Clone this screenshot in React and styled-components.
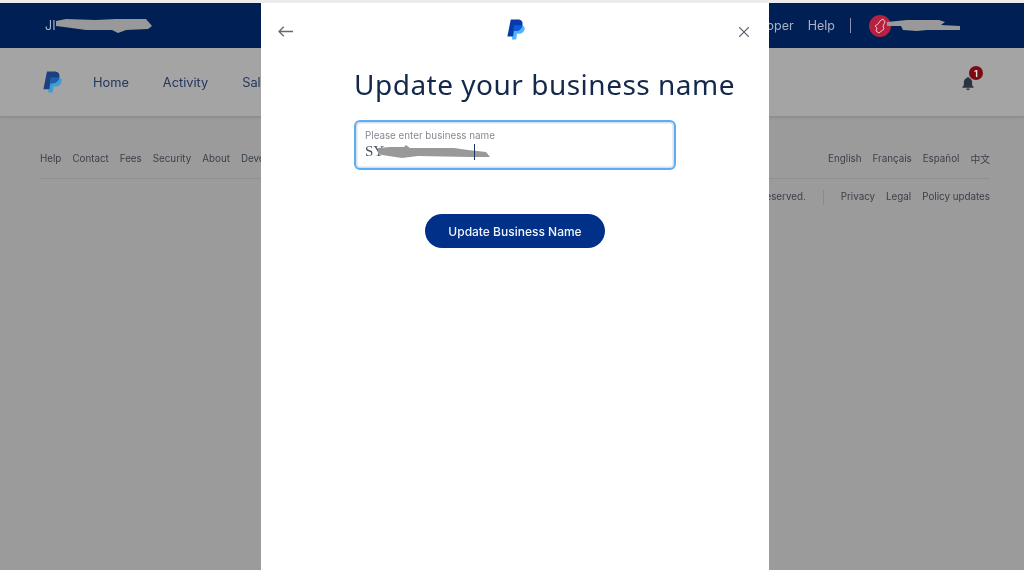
import React from "react";
import styled, { createGlobalStyle } from "styled-components";
import { X } from "lucide-react";

const Global = createGlobalStyle`
  html, body { margin: 0; padding: 0; height: 100%; overflow: hidden; background: #fff; }
  #root { height: 570px; }
  * { box-sizing: border-box; }
`;

const Screen = styled.div`
  position: relative;
  width: 1024px;
  height: 570px;
  overflow: hidden;
  background: #9b9b9b;
  font-family: Inter, "Liberation Sans", sans-serif;
  filter: blur(0.3px);
`;
const Backdrop = styled.div`
  display: flex;
  flex-direction: column;
  height: 100%;
`;
const TopStrip = styled.div`
  height: 3px;
  background: #ececec;
`;
const TopBar = styled.header`
  height: 45px;
  background: #001f55;
  display: flex;
  align-items: center;
  justify-content: space-between;
  padding: 0 64px 0 45px;
  color: #a9b2c4;
  font-size: 12.5px;
`;
const Group = styled.div`
  display: flex;
  align-items: center;
  gap: ${(p) => p.$gap || 0}px;
`;
const NavLinks = styled(Group)`
  margin-left: 31px;
`;
const Divider = styled.span`
  width: 1px;
  height: 15px;
  background: #8a93a8;
  margin: 0 18px 0 15px;
`;
const Avatar = styled.span`
  width: 22px;
  height: 22px;
  border-radius: 50%;
  background: #b5213f;
  display: flex;
  align-items: center;
  justify-content: center;
`;
const Blob = styled.svg`
  display: block;
  flex: none;
  fill: #999;
  margin-left: ${(p) => p.$shift || 0}px;
`;
const SubNav = styled.nav`
  height: 68px;
  background: #a4a4a4;
  box-shadow: 0 1px 3px rgba(0, 0, 0, 0.15);
  display: flex;
  align-items: center;
  justify-content: space-between;
  padding: 0 41px 0 43px;
`;
const NavLink = styled.span`
  font-size: 12.8px;
  color: #23375f;
`;
const BellWrap = styled.div`
  position: relative;
  width: 12px;
  height: 14px;
  margin-right: 9px;
`;
const Badge = styled.span`
  position: absolute;
  top: -9px;
  left: 7px;
  width: 14px;
  height: 14px;
  border-radius: 50%;
  background: #7c0a12;
  color: #ddd;
  font-size: 9px;
  font-weight: 700;
  display: flex;
  align-items: center;
  justify-content: center;
`;
const Footer = styled.footer`
  padding: 36px 34px 0 40px;
  font-size: 9.8px;
  line-height: 12px;
  color: #3a3f49;
`;
const FooterTop = styled.div`
  display: flex;
  align-items: flex-start;
  justify-content: space-between;
  height: 27px;
  padding-top: 1px;
  border-bottom: 1px solid #8f8f8f;
`;
const FooterBottom = styled.div`
  display: flex;
  align-items: center;
  justify-content: flex-end;
  height: 36px;
`;
const FooterDivider = styled.span`
  width: 1px;
  height: 15px;
  background: #8a8a8a;
  margin: 0 17px;
`;
const Cjk = styled.span`
  font-family: "Noto Sans CJK SC", sans-serif;
`;

const Modal = styled.section`
  position: absolute;
  top: 3px;
  left: 261px;
  width: 508px;
  bottom: 0;
  background: #fff;
  display: flex;
  flex-direction: column;
`;
const ModalHead = styled.div`
  height: 57px;
  display: flex;
  align-items: center;
  justify-content: space-between;
  padding: 0 16px 0 17px;
  color: #616874;
`;
const HeadLogo = styled.div`
  margin: 0 0 4px 3px;
`;
const ModalBody = styled.div`
  padding: 0 93px;
  display: flex;
  flex-direction: column;
`;
const Title = styled.h1`
  margin: 4px 0 0;
  font-family: "Noto Sans", sans-serif;
  font-weight: 400;
  font-size: 28px;
  line-height: 40px;
  letter-spacing: 0.5px;
  color: #14284b;
  white-space: nowrap;
`;
const Field = styled.div`
  position: relative;
  margin-top: 16px;
  width: 322px;
  height: 50px;
  border: 2px solid #5aaef6;
  border-radius: 6px;
  box-shadow: inset 0 0 0 1.5px #dcdfe3;
  padding: 8px 9px 0;
`;
const FieldLabel = styled.div`
  font-size: 9.8px;
  line-height: 12px;
  color: #858a92;
`;
const FieldValue = styled.div`
  display: flex;
  align-items: center;
  height: 19px;
  font-family: "Liberation Serif", serif;
  font-size: 15px;
  color: #4a5463;
`;
const Caret = styled.span`
  position: absolute;
  left: 118px;
  top: 22px;
  width: 1px;
  height: 16px;
  background: #1c3560;
`;
const Primary = styled.button`
  margin: 44px 0 0 71px;
  width: 180px;
  height: 34px;
  border: 0;
  border-radius: 17px;
  background: #003087;
  color: #f1f4fa;
  font-family: Inter, "Liberation Sans", sans-serif;
  font-size: 12px;
  font-weight: 500;
`;

const Logo = ({ w, h, dark, mid, light }) => (
  <svg width={w} height={h} viewBox="0 0 24 28" style={{ display: "block" }}>
    <path fill={light} d="M9.5 7.5h9c3.6 0 5.6 2.200 5 5.500-.7 3.700-3.600 6-7.500 6h-2.700l-1.100 7.500H6.500Z" />
    <path fill={dark} d="M5 0h9c5 0 7.600 2.600 6.600 7.500C19.600 12 16.300 15 12 15H9.200L8 22.500H0.500Z" />
    <path fill={mid} d="M9.500 7.500h11.100C19.600 12 16.300 15 12 15H8.300Z" />
  </svg>
);
const NavBlob = () => (
  <Blob width="96" height="16" viewBox="0 0 96 16">
    <path d="M0 3 10 1l30 1 20-1 30 0 6 7-4 3-22 1-8 3-6-3H30L8 9 0 8Z" />
  </Blob>
);
const UserBlob = () => (
  <Blob $shift={-4} width="73" height="13" viewBox="0 0 73 13">
    <path d="M0 3 20 1h32l6 2-4 3 19 1v4H40L30 12 16 11 14 7 0 7Z" />
  </Blob>
);
const ValueBlob = () => (
  <Blob $shift={-6} width="112" height="16" viewBox="0 0 112 16">
    <path d="M0 4 12 3h14l2-2 4 3h44l14 2 18 2 4 5H92L40 12 24 14 4 11 0 10Z" />
  </Blob>
);

export default function App() {
  return (
    <Screen>
      <Global />
      <Backdrop>
        <TopStrip />
        <TopBar>
          <Group>
            <span>JI</span>
            <NavBlob />
          </Group>
          <Group>
            <Group $gap={14}>
              <span>Developer</span>
              <span>Help</span>
            </Group>
            <Divider />
            <Group>
              <Avatar>
                <svg width="15" height="16" viewBox="0 0 15 16" fill="none" stroke="#e7c3cb" strokeWidth="1">
                  <path d="M10 1 12 4 10 8 11 11 6 15 3 13 4 10 2 8 5 6 7 3Z" />
                </svg>
              </Avatar>
              <UserBlob />
            </Group>
          </Group>
        </TopBar>
        <SubNav>
          <Group>
            <Logo w={19} h={23} dark="#1d3f80" mid="#1d5fa8" light="#3f9cd6" />
            <NavLinks $gap={34}>
              <NavLink>Home</NavLink>
              <NavLink>Activity</NavLink>
              <NavLink>Sales</NavLink>
            </NavLinks>
          </Group>
          <BellWrap>
            <svg width="12" height="14" viewBox="0 0 14 17" fill="#2c3340">
              <path d="M7 0c.8 0 1.200.6 1.200 1.300C10.600 2 12 4 12 6.500V10l2 2.400V13H0v-.6L2 10V6.500C2 4 3.400 2 5.800 1.300 5.800.6 6.200 0 7 0Z" />
              <path d="M5 14h4a2 2 0 0 1-4 0Z" />
            </svg>
            <Badge>1</Badge>
          </BellWrap>
        </SubNav>
        <Footer>
          <FooterTop>
            <Group $gap={11}>
              <span>Help</span>
              <span>Contact</span>
              <span>Fees</span>
              <span>Security</span>
              <span>About</span>
              <span>Developers</span>
            </Group>
            <Group $gap={11}>
              <span>English</span>
              <span>Français</span>
              <span>Español</span>
              <Cjk>中文</Cjk>
            </Group>
          </FooterTop>
          <FooterBottom>
            <span>©1999–2023 PayPal, Inc. All rights reserved.</span>
            <FooterDivider />
            <Group $gap={11}>
              <span>Privacy</span>
              <span>Legal</span>
              <span>Policy updates</span>
            </Group>
          </FooterBottom>
        </Footer>
      </Backdrop>
      <Modal>
        <ModalHead>
          <svg width="15" height="11" viewBox="0 0 15 11" fill="none" stroke="currentColor" strokeWidth="1.300">
            <path d="M15 5.500H1M5.800.7 1 5.500l4.800 4.800" />
          </svg>
          <HeadLogo>
            <Logo w={18} h={22} dark="#0a3aa8" mid="#0a5be0" light="#4fb4ff" />
          </HeadLogo>
          <X size={18} strokeWidth={1.5} />
        </ModalHead>
        <ModalBody>
          <Title>Update your business name</Title>
          <Field>
            <FieldLabel>Please enter business name</FieldLabel>
            <FieldValue>
              <span>SY</span>
              <ValueBlob />
            </FieldValue>
            <Caret />
          </Field>
          <Primary>Update Business Name</Primary>
        </ModalBody>
      </Modal>
    </Screen>
  );
}
